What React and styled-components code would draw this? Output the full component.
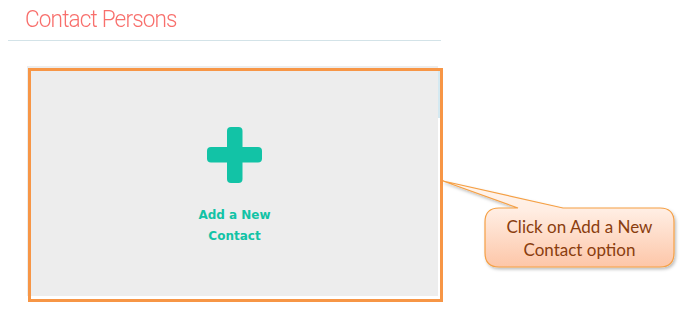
import React from "react";
import styled, { createGlobalStyle } from "styled-components";

const Global = createGlobalStyle`
  html, body { margin: 0; padding: 0; background: #ffffff; }
  #root { width: 684px; height: 334px; }
`;

const Page = styled.div`
  position: relative;
  width: 684px;
  height: 334px;
  background: #ffffff;
  overflow: hidden;
  display: flex;
  flex-direction: column;
`;

const Header = styled.div`
  height: 40px;
  padding-left: 25px;
  box-sizing: border-box;
  padding-top: 7px;
`;

const Title = styled.h2`
  margin: 0;
  font-family: Roboto, "Liberation Sans", sans-serif;
  font-weight: 300;
  font-size: 24px;
  line-height: 24px;
  letter-spacing: -0.9px;
  color: #f86f6c;
  transform: scaleX(0.94);
  transform-origin: left center;
  white-space: nowrap;
`;

const Divider = styled.div`
  margin-left: 8px;
  width: 433px;
  height: 1px;
  background: #d3e3e8;
`;

const Card = styled.div`
  margin-top: 25px;
  margin-left: 27px;
  width: 414px;
  height: 230px;
  display: flex;
`;

const CardBody = styled.div`
  flex: 1;
  background: #ededed;
  display: flex;
  flex-direction: column;
  align-items: center;
  padding-top: 61px;
  padding-left: 4px;
  box-sizing: border-box;
`;

const Track = styled.div`
  width: 3px;
  background: #ffffff;
  display: flex;
  flex-direction: column;
  padding-top: 5px;
`;

const Thumb = styled.div`
  height: 47px;
  background: #d5e9f1;
`;

const AddLabel = styled.div`
  margin-top: 22px;
  font-family: "DejaVu Sans", Verdana, sans-serif;
  font-weight: bold;
  font-size: 12px;
  line-height: 21px;
  color: #12c3a6;
  text-align: center;
`;

const Highlight = styled.div`
  position: absolute;
  left: 28px;
  top: 68px;
  width: 415px;
  height: 234px;
  box-sizing: border-box;
  border: 3px solid #f79646;
  pointer-events: none;
`;

const CalloutSvg = styled.svg`
  position: absolute;
  left: 0;
  top: 0;
  pointer-events: none;
`;

const CalloutText = styled.div`
  position: absolute;
  left: 485px;
  top: 215px;
  width: 189px;
  font-family: Lato, "Open Sans", sans-serif;
  font-size: 17px;
  line-height: 23px;
  color: #8a3d0e;
  text-align: center;
`;

function PlusIcon() {
  return (
    <svg width="56" height="56" viewBox="0 0 56 56">
      <rect x="20" y="0" width="15.5" height="56" rx="4" fill="#12c3a6" />
      <rect x="0" y="20" width="55" height="15.5" rx="4" fill="#12c3a6" />
    </svg>
  );
}

function Callout() {
  const r = 14;
  const L = 485, R = 674, T = 208, B = 267;
  const d = `M443 181 L563 ${T} L${R - r} ${T} Q${R} ${T} ${R} ${T + r} L${R} ${B - r} Q${R} ${B} ${R - r} ${B} L${L + r} ${B} Q${L} ${B} ${L} ${B - r} L${L} ${T + r} Q${L} ${T} ${L + r} ${T} L518 ${T} Z`;
  return (
    <CalloutSvg width="684" height="334" viewBox="0 0 684 334">
      <defs>
        <linearGradient id="cg" x1="0" y1="181" x2="0" y2="267" gradientUnits="userSpaceOnUse">
          <stop offset="0" stopColor="#fff6ef" />
          <stop offset="0.35" stopColor="#ffede2" />
          <stop offset="1" stopColor="#fdc6a8" />
        </linearGradient>
        <filter id="sh" x="-10%" y="-10%" width="130%" height="140%">
          <feDropShadow dx="1.5" dy="2" stdDeviation="1.5" floodColor="#000" floodOpacity="0.25" />
        </filter>
      </defs>
      <path d={d} fill="url(#cg)" stroke="#f5a045" strokeWidth="1.2" filter="url(#sh)" />
    </CalloutSvg>
  );
}

export default function App() {
  return (
    <>
      <Global />
      <Page>
        <Header>
          <Title>Contact Persons</Title>
        </Header>
        <Divider />
        <Card>
          <CardBody>
            <PlusIcon />
            <AddLabel>
              Add a New
              <br />
              Contact
            </AddLabel>
          </CardBody>
          <Track>
            <Thumb />
          </Track>
        </Card>
        <Highlight />
        <Callout />
        <CalloutText>
          Click on Add a New
          <br />
          Contact option
        </CalloutText>
      </Page>
    </>
  );
}
